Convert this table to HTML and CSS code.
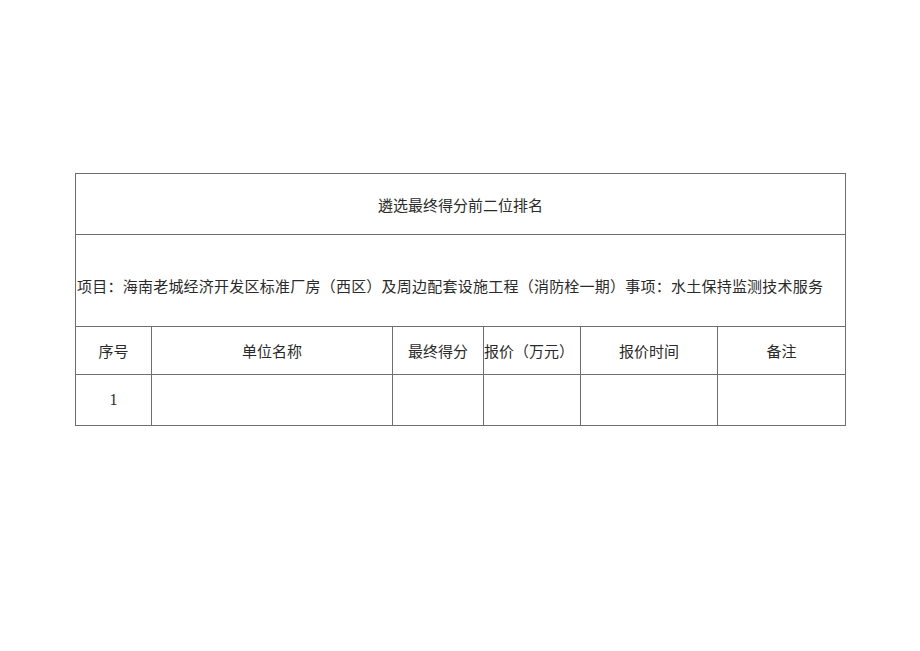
FILE: index.html
```html
<!DOCTYPE html>
<html lang="zh">
<head>
<meta charset="utf-8">
<title>遴选最终得分前二位排名</title>
<link rel="stylesheet" href="styles.css">
</head>
<body>
<div class="page">
  <div class="grid">
    <div class="cell span title">遴选最终得分前二位排名</div>
    <div class="cell span project">项目：海南老城经济开发区标准厂房（西区）及周边配套设施工程（消防栓一期）事项：水土保持监测技术服务</div>
    <div class="cell head">序号</div>
    <div class="cell head">单位名称</div>
    <div class="cell head">最终得分</div>
    <div class="cell head left">报价（万元）</div>
    <div class="cell head">报价时间</div>
    <div class="cell head">备注</div>
    <div class="cell data num">1</div>
    <div class="cell data"></div>
    <div class="cell data"></div>
    <div class="cell data"></div>
    <div class="cell data"></div>
    <div class="cell data"></div>
  </div>
</div>
</body>
</html>
```

FILE: styles.css
```css
html, body {
  margin: 0;
  padding: 0;
  background: #ffffff;
}

.page {
  padding: 173px 0 0 75px;
  font-family: "Noto Sans CJK SC", "Liberation Serif", serif;
  font-size: 15px;
  color: #2a2a2a;
}

.grid {
  display: grid;
  width: 771px;
  box-sizing: border-box;
  grid-template-columns: 76px 241px 91px 97px 137px 128px;
  grid-template-rows: 61px 92px 48px 51px;
  border-left: 1px solid #6e6e6e;
  border-top: 1px solid #6e6e6e;
}

.cell {
  box-sizing: border-box;
  border-right: 1px solid #6e6e6e;
  border-bottom: 1px solid #6e6e6e;
  display: flex;
  align-items: center;
  justify-content: center;
  white-space: nowrap;
  line-height: 1;
}

.span {
  grid-column: 1 / -1;
}

.title {
  padding-top: 1px;
}

.project {
  justify-content: flex-start;
  padding: 9px 0 0 1px;
  letter-spacing: 0.23px;
}

.head.left {
  justify-content: flex-start;
  padding-left: 0;
}

.num {
  font-family: "Liberation Serif", serif;
  font-size: 16px;
}
```
